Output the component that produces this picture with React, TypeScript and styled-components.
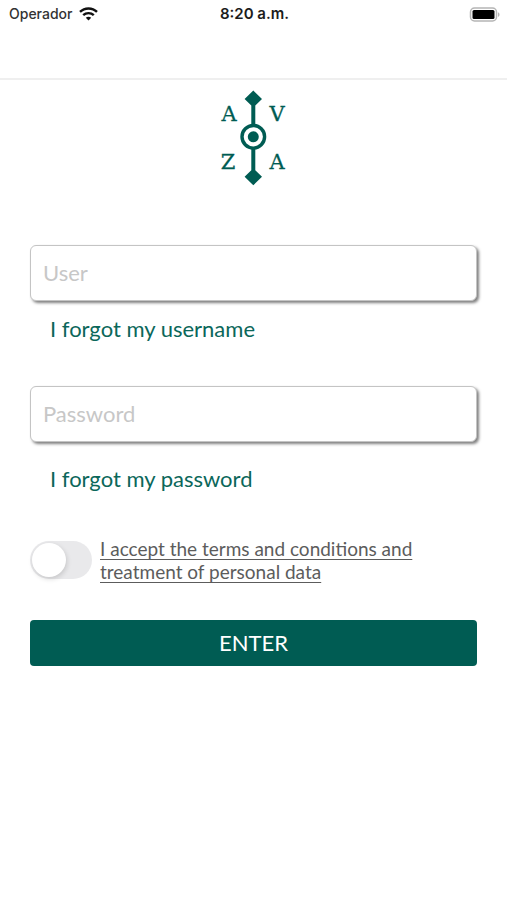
import React, { useState } from "react";
import styled, { createGlobalStyle } from "styled-components";

const GREEN = "#005c53";

const GlobalStyle = createGlobalStyle`
  *, *::before, *::after { box-sizing: border-box; }
  body {
    margin: 0;
    background: #fff;
    font-family: Lato, "Liberation Sans", sans-serif;
  }
`;

const StatusBar = styled.div`
  display: grid;
  grid-template-columns: 1fr auto 1fr;
  align-items: center;
  height: 28px;
  padding: 0 7px 0 9px;
  font: 500 14px/20px Inter, sans-serif;
  color: #333;
`;

const Carrier = styled.span`
  display: flex;
  align-items: center;
  gap: 7px;
`;

const Clock = styled.time`
  font-size: 15px;
  font-weight: 600;
  color: #1c1c1c;
`;

const BatteryIcon = styled.svg`
  justify-self: end;
`;

const NavBar = styled.header`
  height: 52px;
  border-bottom: 2px solid #efefef;
`;

const LoginForm = styled.form`
  display: flex;
  flex-direction: column;
  padding: 10px 30px 32px;
`;

const Logo = styled.svg`
  align-self: center;
  margin-bottom: 59px;
  fill: ${GREEN};
  font: 21px "DejaVu Serif", serif;
`;

const TextField = styled.input`
  width: 100%;
  height: 56px;
  padding: 0 12px 2px;
  border: 1px solid #c4c4c4;
  border-radius: 6px;
  background: #fff;
  box-shadow: 2px 2px 3px rgba(0, 0, 0, 0.5);
  font: 400 22px/28px Lato, sans-serif;
  color: #333;

  &::placeholder {
    color: #c7c7c7;
    opacity: 1;
  }
`;

const HelpLink = styled.a<{ $before: number; $after: number }>`
  align-self: flex-start;
  margin: ${(p) => p.$before}px 0 ${(p) => p.$after}px 20px;
  font-size: 22px;
  line-height: 28px;
  color: #0b675a;
  text-decoration: none;
`;

const TermsRow = styled.div`
  display: flex;
  align-items: center;
  gap: 8px;
  margin-bottom: 37px;
`;

const Toggle = styled.input`
  appearance: none;
  flex: none;
  display: flex;
  align-items: center;
  width: 62px;
  height: 38px;
  margin: 0;
  padding: 0 2px;
  border-radius: 19px;
  background: #e9e9eb;
  cursor: pointer;

  &::before {
    content: "";
    width: 34px;
    height: 34px;
    border-radius: 50%;
    background: #fff;
    box-shadow: 1px 2px 5px rgba(0, 0, 0, 0.15);
  }

  &:checked {
    justify-content: flex-end;
    background: ${GREEN};
  }
`;

const TermsLabel = styled.label`
  max-width: 330px;
  font-size: 19px;
  font-weight: 400;
  line-height: 23px;
  color: #5c5c5c;
  text-decoration: underline;
  text-decoration-thickness: 1px;
  text-decoration-skip-ink: none;
  text-underline-offset: 3px;
  cursor: pointer;
`;

const EnterButton = styled.button`
  height: 46px;
  border: 0;
  border-radius: 4px;
  background: ${GREEN};
  font: 400 22px/28px Lato, sans-serif;
  color: #fff;
  cursor: pointer;
`;

export default function App() {
  const [accepted, setAccepted] = useState(false);

  return (
    <>
      <GlobalStyle />
      <StatusBar>
        <Carrier>
          Operador
          <svg width="19" height="14" viewBox="0 0 19 14" fill="none" stroke="#111" strokeWidth="2.4" aria-label="Wi-Fi">
            <path d="M1 4.9C5.7.3 13.3.3 18 4.9" />
            <path d="M4.2 8.2c3-2.8 7.6-2.8 10.6 0" />
            <path d="M6.8 10.8c1.5-1.4 3.9-1.4 5.4 0L9.5 13.6z" fill="#111" stroke="none" />
          </svg>
        </Carrier>
        <Clock>8:20 a.m.</Clock>
        <BatteryIcon width="31" height="15" viewBox="0 0 31 15" aria-label="Battery full">
          <rect x="1.5" y="1" width="26" height="13" rx="4" fill="#fff" stroke="#b5b5b5" strokeWidth="1.5" />
          <rect x="3.5" y="3" width="22" height="9" rx="1.5" fill="#000" />
          <path d="M29 5.2c2 .8 2 3.8 0 4.6z" fill="#b5b5b5" />
        </BatteryIcon>
      </StatusBar>
      <NavBar />
      <LoginForm onSubmit={(e) => e.preventDefault()}>
        <Logo width="81" height="96" viewBox="0 0 81 96" role="img" aria-label="AVZA">
          <path d="M40.300 0.500l8.700 8.500-6.700 6.500V35h-4V15.500L31.600 9z" />
          <path d="M40.300 95.300l8.700-8.500-6.700-6.500V59h-4v21.300l-6.700 6.500z" />
          <circle cx="40.3" cy="46.8" r="11.300" fill="none" stroke={GREEN} strokeWidth="3.400" />
          <circle cx="40.3" cy="46.8" r="5.500" />
          <g stroke={GREEN} strokeWidth="0.3">
            <text x="16" y="31" textAnchor="middle">A</text>
            <text x="64" y="31" textAnchor="middle">V</text>
            <text x="15" y="79" textAnchor="middle">Z</text>
            <text x="64" y="79" textAnchor="middle">A</text>
          </g>
        </Logo>
        <TextField type="text" placeholder="User" aria-label="User" autoComplete="username" />
        <HelpLink href="#username" $before={14} $after={43}>I forgot my username</HelpLink>
        <TextField type="password" placeholder="Password" aria-label="Password" autoComplete="current-password" />
        <HelpLink href="#password" $before={23} $after={44}>I forgot my password</HelpLink>
        <TermsRow>
          <Toggle
            id="terms"
            type="checkbox"
            role="switch"
            checked={accepted}
            onChange={(e) => setAccepted(e.target.checked)}
          />
          <TermsLabel htmlFor="terms">
            I accept the terms and conditions and treatment of personal data
          </TermsLabel>
        </TermsRow>
        <EnterButton type="submit">ENTER</EnterButton>
      </LoginForm>
    </>
  );
}
